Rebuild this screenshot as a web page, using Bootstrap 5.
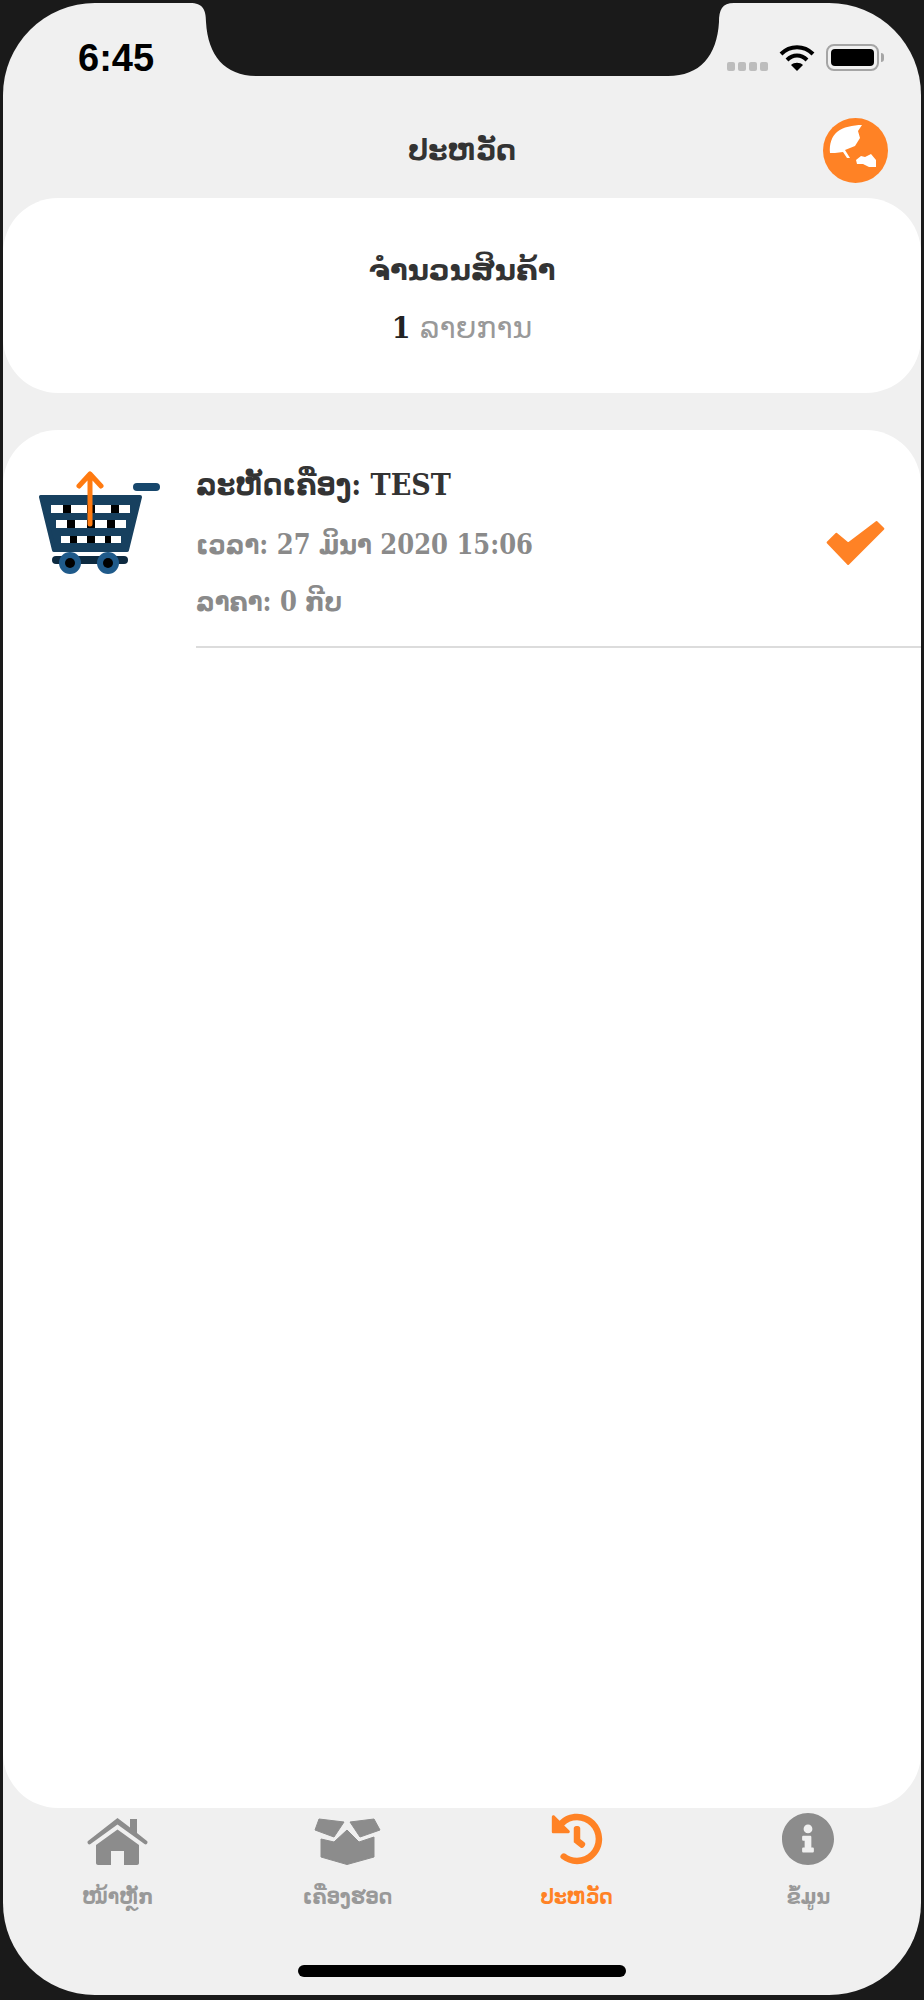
<!DOCTYPE html>
<html lang="lo">
<head>
    <meta charset="UTF-8">
    <meta name="viewport" content="width=device-width, initial-scale=1.0">
    <link href="https://cdn.jsdelivr.net/npm/bootstrap@5.3.0/dist/css/bootstrap.min.css" rel="stylesheet">
    <title>ປະຫວັດ</title>
    <style>
        html, body { height: 2000px; background: #1a1a1a; }
        body { font-family: "DejaVu Sans", "Noto Sans", sans-serif; overflow: hidden; }
        .screen { position: relative; height: 1992px; margin: 3px 3px 5px; background: #f0f0f0; border-radius: 92px; overflow: hidden; }
        .notch { position: absolute; left: -3px; top: -3px; }
        .status-row { height: 100px; padding: 35px 37px 0 75px; }
        .clock { font: 700 38px/40px "Liberation Sans", sans-serif; color: #000; }
        .status-icons { margin-top: 6px; }
        .signal-dots { gap: 3px; margin-right: 11px; }
        .wifi-icon { margin-right: 11px; }
        .signal-dot { width: 8px; height: 9px; background: #bdbdbd; border-radius: 2px; }
        .battery { width: 53px; height: 27px; padding: 3px; border: 2px solid #a5a5a5; border-radius: 8px; }
        .battery span { display: block; height: 100%; background: #000; border-radius: 4px; }
        .battery-tip { width: 3px; height: 9px; background: #a5a5a5; border-radius: 0 3px 3px 0; margin-left: 2px; }
        .top-bar { height: 95px; display: grid; grid-template-columns: 1fr auto 1fr; align-items: center; padding: 0 33px; }
        .top-title { font-size: 28px; font-weight: 700; color: #333; }
        .summary-box { height: 195px; margin-bottom: 37px; padding-top: 5px; background: #fff; border-radius: 55px; }
        .summary-title { font-size: 29px; font-weight: 700; color: #333; line-height: 50px; }
        .summary-sub { font-size: 30px; color: #999; line-height: 46px; margin-top: 10px; }
        .summary-sub b { color: #222; font-family: "DejaVu Serif", serif; font-stretch: condensed; }
        .list-box { height: 1378px; background: #fff; border-radius: 55px; }
        .cart-col { width: 193px; flex: none; padding: 38px 0 0 27px; }
        .item-body { height: 218px; border-bottom: 2px solid #dcdcdc; padding: 28px 36px 0 0; }
        .item-name { font: 700 30px/54px "DejaVu Serif", "DejaVu Sans", serif; font-stretch: condensed; color: #333; }
        .item-line { font: 700 27px/57px "DejaVu Serif", "DejaVu Sans", serif; font-stretch: condensed; color: #8a8a8a; }
        .check-icon { margin-top: 62px; }
        .tab-row { height: 187px; padding-top: 5px; }
        .tab-icon { height: 52px; }
        .tab-label { display: inline-block; transform: scaleX(.85); font-size: 22px; font-weight: 700; color: #999; line-height: 32px; margin-top: 16px; }
        .tab-on .tab-label { color: #ff8225; }
        .home-bar { position: absolute; left: 295px; bottom: 18px; width: 328px; height: 12px; background: #000; border-radius: 6px; }
    </style>
</head>
<body>
    <div class="screen d-flex flex-column">
        <svg class="notch" width="924" height="80" viewBox="0 0 924 80">
            <path d="M190 0 H734 V3 C722 3 719 10 719 22 C717 56 700 76 668 76 H257 C225 76 208 56 206 22 C206 10 203 3 190 3 Z" fill="#1a1a1a"/>
        </svg>

        <div class="status-row d-flex justify-content-between align-items-start">
            <div class="clock">6:45</div>
            <div class="status-icons d-flex align-items-center">
                <div class="signal-dots d-flex align-self-end">
                    <span class="signal-dot"></span><span class="signal-dot"></span><span class="signal-dot"></span><span class="signal-dot"></span>
                </div>
                <svg class="wifi-icon" width="36" height="27" viewBox="0 0 36 27" fill="none" stroke="#000" stroke-width="4">
                    <path d="M2 10 C11 1 25 1 34 10"/>
                    <path d="M8 16 C14 10 22 10 28 16"/>
                    <path d="M18 27 L12 21 C15 18 21 18 24 21 Z" fill="#000" stroke="none"/>
                </svg>
                <div class="battery"><span></span></div>
                <div class="battery-tip"></div>
            </div>
        </div>

        <div class="top-bar">
            <span></span>
            <div class="top-title">ປະຫວັດ</div>
            <svg class="ms-auto" width="65" height="65" viewBox="0 0 65 65">
                <circle cx="32.5" cy="32.5" r="32.5" fill="#ff8225"/>
                <path d="M7 35 C6 26 9 18 14 14 C20 9 30 7 39 7 L35 13 L37 20 L32 28 L22 32 L27 40 L24 40 L20 34 L12 35 Z" fill="#fff"/>
                <path d="M33 42 L38 38 L42 39 L48 36 L53 42 L53 49 L46 49 L40 46 L34 46 Z" fill="#fff"/>
            </svg>
        </div>

        <div class="summary-box text-center d-flex flex-column justify-content-center">
            <div class="summary-title">ຈຳນວນສິນຄ້າ</div>
            <div class="summary-sub"><b>1</b> ລາຍການ</div>
        </div>

        <div class="list-box">
            <div class="d-flex">
                <div class="cart-col">
                    <svg width="132" height="110" viewBox="30 468 132 110">
                        <path d="M41 497 H140 L127 550 H54 Z" fill="#17405f" stroke="#17405f" stroke-width="4" stroke-linejoin="round"/>
                        <g fill="#000">
                            <rect x="51" y="505" width="79" height="8"/>
                            <rect x="56" y="520" width="70" height="8"/>
                            <rect x="61" y="536" width="60" height="7"/>
                        </g>
                        <g fill="#fff">
                            <rect x="51" y="505" width="12" height="8"/><rect x="71" y="505" width="16" height="8"/><rect x="95" y="505" width="16" height="8"/><rect x="119" y="505" width="11" height="8"/>
                            <rect x="56" y="520" width="11" height="8"/><rect x="75" y="520" width="12" height="8"/><rect x="95" y="520" width="12" height="8"/><rect x="115" y="520" width="11" height="8"/>
                            <rect x="61" y="536" width="9" height="7"/><rect x="77" y="536" width="10" height="7"/><rect x="95" y="536" width="10" height="7"/><rect x="111" y="536" width="10" height="7"/>
                        </g>
                        <rect x="133" y="483" width="27" height="8" rx="4" fill="#17476c"/>
                        <rect x="52" y="556" width="76" height="8" rx="4" fill="#0d2a40"/>
                        <circle cx="70" cy="563" r="11" fill="#1f5a8a"/>
                        <circle cx="108" cy="563" r="11" fill="#1f5a8a"/>
                        <circle cx="70" cy="563" r="5" fill="#000"/>
                        <circle cx="108" cy="563" r="5" fill="#000"/>
                        <path d="M90 524 V474 M79 486 L90 474 L101 486" fill="none" stroke="#ff7a10" stroke-width="5" stroke-linecap="round" stroke-linejoin="round"/>
                    </svg>
                </div>
                <div class="item-body flex-grow-1 d-flex justify-content-between align-items-start">
                    <div>
                        <div class="item-name">ລະຫັດເຄື່ອງ: TEST</div>
                        <div class="item-line mt-1">ເວລາ: 27 ມິນາ 2020 15:06</div>
                        <div class="item-line">ລາຄາ: 0 ກີບ</div>
                    </div>
                    <svg class="check-icon" width="60" height="46" viewBox="-1 -1 60 47">
                        <path d="M51 1 L58 8 L22 44 L1 22 L10 13 L22 23 Z" fill="#ff8225" stroke="#ff8225" stroke-width="2" stroke-linejoin="round"/>
                    </svg>
                </div>
            </div>
        </div>

        <div class="tab-row row g-0 text-center">
            <div class="col-3">
                <div class="tab-icon d-flex justify-content-center align-items-end">
                    <svg width="61" height="47" viewBox="0 0 61 47" fill="#8c8c8c">
                        <path d="M30.5 0 L43 9.5 V1 H50 V15 L60 23 C61.5 24.5 59.5 27.5 57.5 26 L30.5 6.5 L3.5 26 C1.5 27.5 -.5 24.5 1 23 Z"/>
                        <path d="M30.5 11.5 L52 27 V45 C52 46 51 47 50 47 H37 V33 H24 V47 H11 C10 47 9 46 9 45 V27 Z"/>
                    </svg>
                </div>
                <div class="tab-label">ໜ້າຫຼັກ</div>
            </div>
            <div class="col-3">
                <div class="tab-icon d-flex justify-content-center align-items-end">
                    <svg width="67" height="47" viewBox="0 0 67 47" fill="#8c8c8c" stroke="#8c8c8c" stroke-width="1" stroke-linejoin="round">
                        <path d="M5 1 L30 4 L20 19 L1 12 Z"/>
                        <path d="M60 1 L36 4 L46 19 L66 12 Z"/>
                        <path d="M7 21 L20 24 L33 12 L45 24 L60 19 V39 L33 46.5 L7 39 Z"/>
                    </svg>
                </div>
                <div class="tab-label">ເຄື່ອງຮອດ</div>
            </div>
            <div class="col-3 tab-on">
                <div class="tab-icon d-flex justify-content-center">
                    <svg width="52" height="52" viewBox="0 0 512 512" fill="#ff8225">
                        <path d="M504 255.531c.253 136.64-111.18 248.372-247.82 248.468-59.015.042-113.223-20.53-155.822-54.911-11.077-8.94-11.905-25.541-1.839-35.607l11.267-11.267c8.609-8.609 22.353-9.551 31.891-1.984C173.062 425.135 212.781 440 256 440c101.705 0 184-82.311 184-184 0-101.705-82.311-184-184-184-48.814 0-93.149 18.969-126.068 49.932l50.754 50.754c10.08 10.08 2.941 27.314-11.313 27.314H24c-8.837 0-16-7.163-16-16V38.627c0-14.254 17.234-21.393 27.314-11.314l49.372 49.372C129.209 34.136 189.552 8 256 8c136.81 0 247.747 110.78 248 247.531zm-180.912 78.784l9.823-12.63c8.138-10.463 6.253-25.542-4.21-33.679L288 256.349V152c0-13.255-10.745-24-24-24h-16c-13.255 0-24 10.745-24 24v135.651l65.409 50.874c10.463 8.137 25.541 6.253 33.679-4.21z"/>
                    </svg>
                </div>
                <div class="tab-label">ປະຫວັດ</div>
            </div>
            <div class="col-3 ps-1">
                <div class="tab-icon d-flex justify-content-center">
                    <svg width="52" height="52" viewBox="8 8 496 496" fill="#8c8c8c">
                        <path d="M256 8C119.043 8 8 119.083 8 256c0 136.997 111.043 248 248 248s248-111.003 248-248C504 119.083 392.957 8 256 8zm0 110c23.196 0 42 18.804 42 42s-18.804 42-42 42-42-18.804-42-42 18.804-42 42-42zm56 254c0 6.627-5.373 12-12 12h-88c-6.627 0-12-5.373-12-12v-24c0-6.627 5.373-12 12-12h12v-64h-12c-6.627 0-12-5.373-12-12v-24c0-6.627 5.373-12 12-12h64c6.627 0 12 5.373 12 12v100h12c6.627 0 12 5.373 12 12v24z"/>
                    </svg>
                </div>
                <div class="tab-label">ຂໍ້ມູນ</div>
            </div>
        </div>
        <div class="home-bar"></div>
    </div>

    <script src="https://cdn.jsdelivr.net/npm/bootstrap@5.3.0/dist/js/bootstrap.bundle.min.js"></script>
</body>
</html>
